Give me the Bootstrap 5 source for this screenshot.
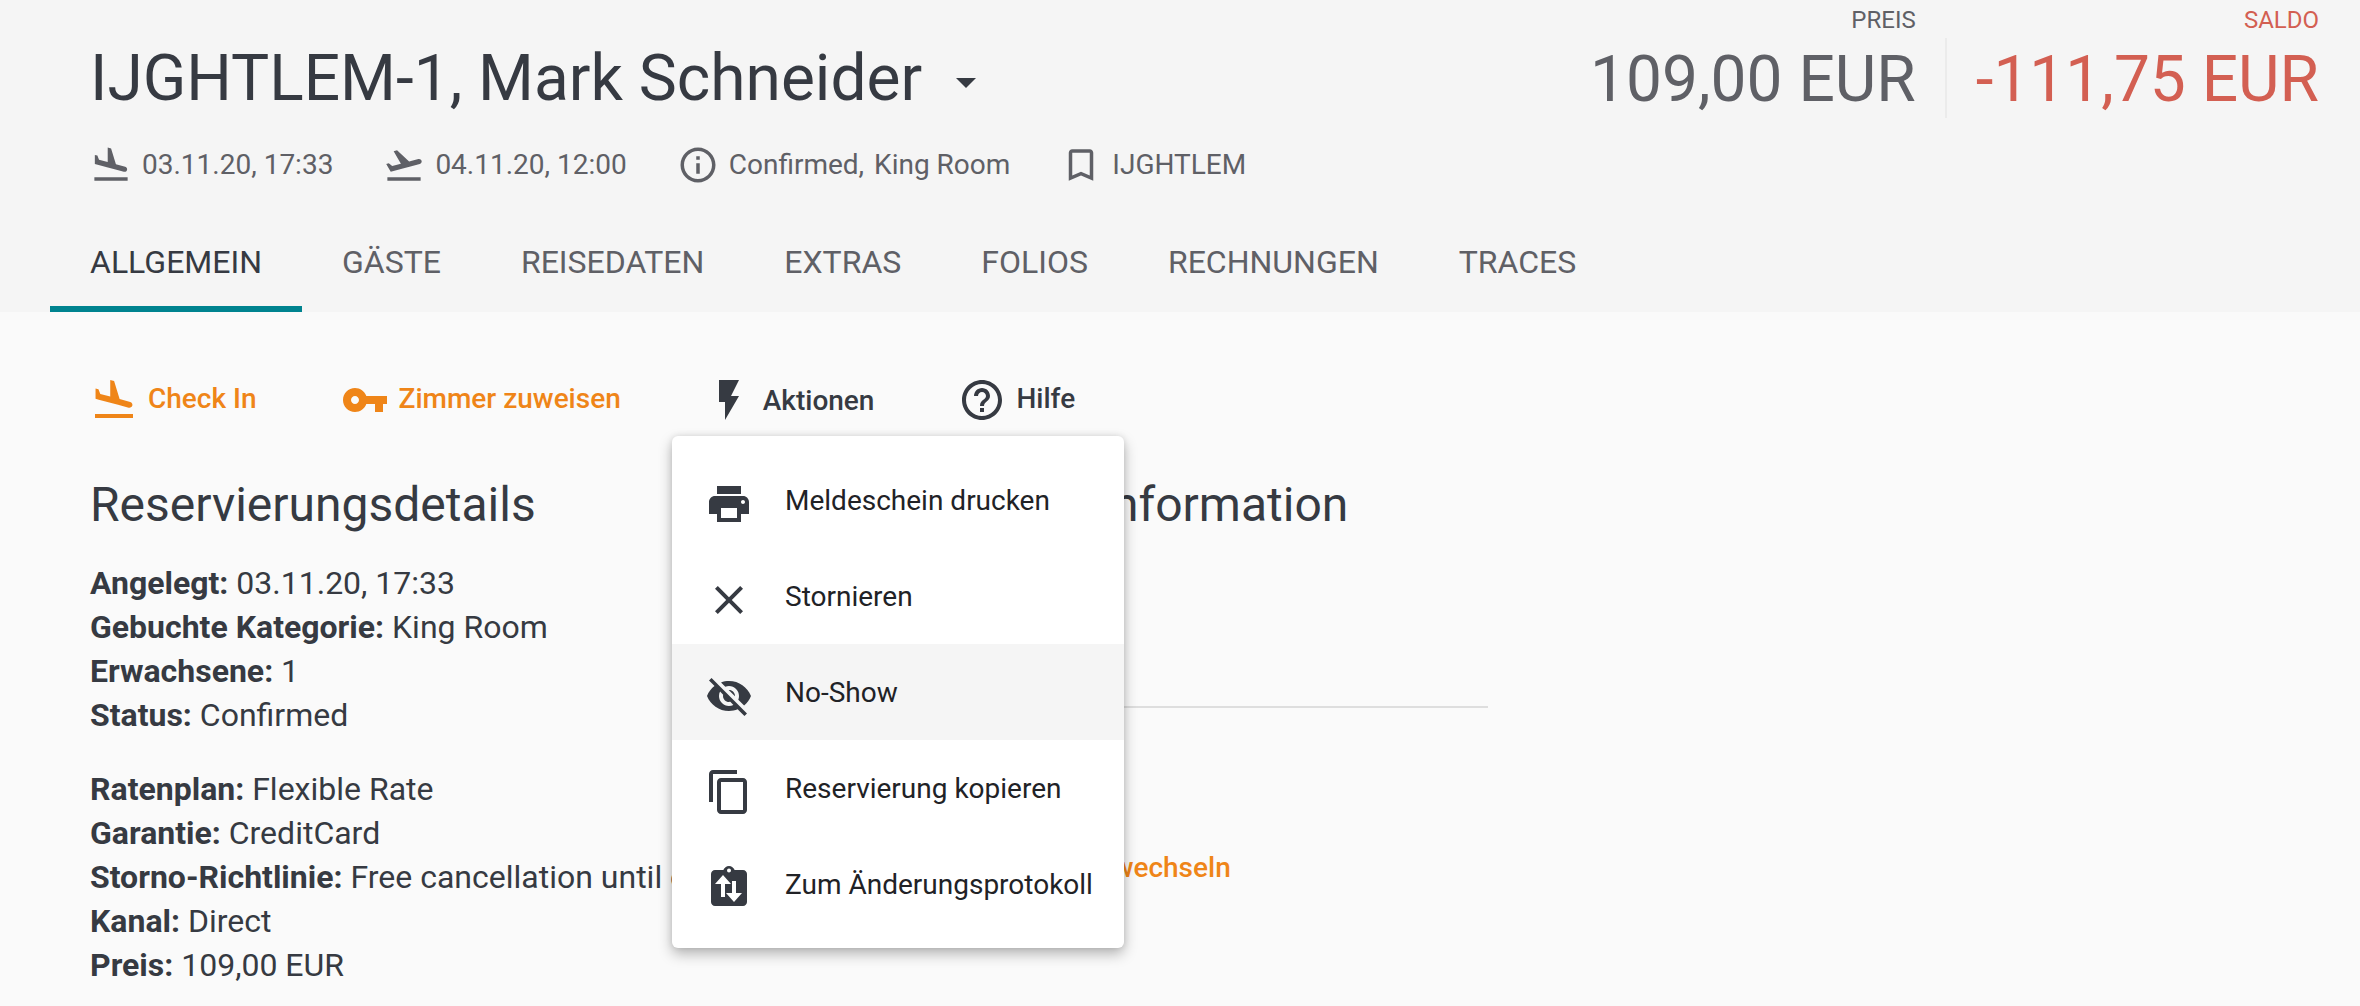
<!DOCTYPE html>
<html lang="de">
<head>
<meta charset="utf-8">
<title>IJGHTLEM-1</title>
<link href="https://cdn.jsdelivr.net/npm/bootstrap@5.3.0/dist/css/bootstrap.min.css" rel="stylesheet">
<style>
html,body{height:100%;}
body{background:#fafafa;color:#363a42;font-family:Roboto,"Liberation Sans",sans-serif;font-size:32px;line-height:44px;overflow:hidden;}
.mi{fill:currentColor;flex:none;display:block;}
.mi-42{width:42px;height:42px;}
.mi-48{width:48px;height:48px;}
.res-head{background:#f5f5f5;height:312px;}
.head-top{padding:0 41px 0 90px;}
.title-wrap{margin-top:43px;}
.res-title{font-size:64px;line-height:72px;font-weight:400;margin:0;color:#363a42;}
.caret-mark{width:0;height:0;border-left:10.5px solid transparent;border-right:10.5px solid transparent;border-top:10.5px solid #363a42;margin:8px 0 0 34px;}
.meta-row{padding:0 0 0 90px;margin-top:26px;color:#5f6066;font-size:28px;line-height:42px;height:42px;}
.meta-item{margin-right:50px;}
.meta-item .mi{margin-right:10px;}
.st-gap{margin-left:3px;}
.amount-lab{font-size:24px;line-height:24px;text-align:right;margin-top:8px;color:#5f6066;}
.amount-val{font-size:64px;line-height:72px;color:#5f6066;margin-top:12px;}
.amount-sep{width:2px;background:#ebebeb;height:80px;margin:38px 29px 0 29px;}
.is-neg{color:#d35f52;}
.tab-row{padding-left:50px;margin-top:49px;}
.tab-link{display:block;padding:0 40px;height:77px;line-height:55px;font-size:32px;color:#5f6066;text-transform:uppercase;text-decoration:none;border-bottom:6px solid transparent;}
.tab-link.is-on{color:#363a42;border-bottom-color:#00838f;}
.act-row{padding-left:90px;margin-top:64px;height:48px;font-size:28px;line-height:48px;font-weight:500;}
.act-link{text-decoration:none;color:#363a42;margin-right:84px;}
.act-link .mi{margin-right:10px;}
.act-link span{margin-bottom:2px;}
.act-orange{color:#ef8518;}
.act-c span{margin-bottom:0;margin-top:1px;}
.body-cols{padding-left:90px;margin-top:51px;}
.col-left{width:844px;flex:none;}
.col-right{width:554px;flex:none;}
.sec-title{font-size:48px;line-height:60px;font-weight:400;margin:0 0 26px;color:#363a42;}
.info-group{margin:0 0 30px;white-space:nowrap;}
.info-group b{font-weight:700;}
.rule-line{margin:171px 0 0;border:0;border-top:2px solid #dedede;opacity:1;}
.swap-link{color:#ef8518;font-weight:500;text-decoration:none;display:block;margin:138px 0 0 74px;font-size:28px;}
.stage{position:relative;height:1006px;}
.menu-pop{display:block;position:absolute;left:672px;top:436px;width:452px;height:512px;padding:16px 0;margin:0;border:0;border-radius:6px;background:#fff;box-shadow:0 6px 14px rgba(0,0,0,.28),0 0 6px rgba(0,0,0,.1);}
.menu-pop .dropdown-item{height:96px;padding:0 0 0 33px;font-size:28px;color:#212226;line-height:96px;}
.menu-pop .dropdown-item span{margin-top:2px;}
.menu-pop .dropdown-item.is-hover{background:#f5f5f5;}
.menu-pop .mi{margin-top:8px;margin-right:32px;color:#363a42;}
</style>
</head>
<body>
<div class="stage">
  <header class="res-head">
    <div class="head-top d-flex justify-content-between align-items-start">
      <div class="title-wrap d-flex align-items-center">
        <h1 class="res-title">IJGHTLEM-1, Mark Schneider</h1>
        <span class="caret-mark"></span>
      </div>
      <div class="d-flex">
        <div>
          <div class="amount-lab">PREIS</div>
          <div class="amount-val">109,00 EUR</div>
        </div>
        <div class="amount-sep"></div>
        <div>
          <div class="amount-lab is-neg">SALDO</div>
          <div class="amount-val is-neg">-111,75 EUR</div>
        </div>
      </div>
    </div>
    <div class="meta-row d-flex align-items-center">
      <div class="meta-item d-flex align-items-center">
        <svg class="mi mi-42" viewBox="0 0 24 24"><path d="M2.5 19h19v2h-19zm7.18-5.73l4.35 1.16 5.31 1.42c.8.21 1.62-.26 1.84-1.06.21-.8-.26-1.62-1.06-1.84l-5.31-1.42-2.76-9.02L10.12 2v8.28L5.15 8.95l-.93-2.32-1.45-.39v5.17l1.6.43 5.31 1.43z"/></svg>
        <span>03.11.20, 17:33</span>
      </div>
      <div class="meta-item d-flex align-items-center">
        <svg class="mi mi-42" viewBox="0 0 24 24"><path d="M2.5 19h19v2h-19zm19.57-9.36c-.21-.8-1.04-1.28-1.84-1.06L14.92 10l-6.9-6.43-1.93.51 4.14 7.17-4.97 1.33-1.97-1.54-1.45.39 1.82 3.16.77 1.33 1.6-.43 5.31-1.42 4.35-1.16L21 11.49c.81-.23 1.28-1.05 1.07-1.85z"/></svg>
        <span>04.11.20, 12:00</span>
      </div>
      <div class="meta-item d-flex align-items-center">
        <svg class="mi mi-42" viewBox="0 0 24 24"><path d="M11 7h2v2h-2zm0 4h2v6h-2zm1-9C6.48 2 2 6.48 2 12s4.48 10 10 10 10-4.48 10-10S17.52 2 12 2zm0 18c-4.41 0-8-3.59-8-8s3.59-8 8-8 8 3.59 8 8-3.59 8-8 8z"/></svg>
        <span>Confirmed, <span class="st-gap">King Room</span></span>
      </div>
      <div class="meta-item d-flex align-items-center">
        <svg class="mi mi-42" viewBox="0 0 24 24"><path d="M17 3H7c-1.1 0-1.99.9-1.99 2L5 21l7-3 7 3V5c0-1.1-.9-2-2-2zm0 15l-5-2.18L7 18V5h10v13z"/></svg>
        <span>IJGHTLEM</span>
      </div>
    </div>
    <nav class="tab-row nav">
      <a class="tab-link is-on" href="#">Allgemein</a>
      <a class="tab-link" href="#">Gäste</a>
      <a class="tab-link" href="#">Reisedaten</a>
      <a class="tab-link" href="#">Extras</a>
      <a class="tab-link" href="#">Folios</a>
      <a class="tab-link" href="#">Rechnungen</a>
      <a class="tab-link" href="#">Traces</a>
    </nav>
  </header>

  <div class="act-row d-flex align-items-center">
    <a class="act-link act-orange d-flex align-items-center" href="#">
      <svg class="mi mi-48" viewBox="0 0 24 24"><path d="M2.5 19h19v2h-19zm7.18-5.73l4.35 1.16 5.31 1.42c.8.21 1.62-.26 1.84-1.06.21-.8-.26-1.62-1.06-1.84l-5.31-1.42-2.76-9.02L10.12 2v8.28L5.15 8.95l-.93-2.32-1.45-.39v5.17l1.6.43 5.31 1.43z"/></svg>
      <span>Check In</span>
    </a>
    <a class="act-link act-orange d-flex align-items-center" href="#">
      <svg class="mi mi-48" viewBox="0 0 24 24"><path d="M12.65 10C11.83 7.67 9.61 6 7 6c-3.31 0-6 2.69-6 6s2.69 6 6 6c2.61 0 4.83-1.67 5.65-4H17v4h4v-4h2v-4H12.65zM7 14c-1.1 0-2-.9-2-2s.9-2 2-2 2 .9 2 2-.9 2-2 2z"/></svg>
      <span>Zimmer zuweisen</span>
    </a>
    <a class="act-link act-c d-flex align-items-center" href="#">
      <svg class="mi mi-48" viewBox="0 0 24 24"><path d="M7 2v11h3v9l7-12h-4l4-8z"/></svg>
      <span>Aktionen</span>
    </a>
    <a class="act-link d-flex align-items-center" href="#">
      <svg class="mi mi-48" viewBox="0 0 24 24"><path d="M11 18h2v-2h-2v2zm1-16C6.48 2 2 6.48 2 12s4.48 10 10 10 10-4.48 10-10S17.52 2 12 2zm0 18c-4.41 0-8-3.59-8-8s3.59-8 8-8 8 3.59 8 8-3.59 8-8 8zm0-14c-2.21 0-4 1.79-4 4h2c0-1.1.9-2 2-2s2 .9 2 2c0 2-3 1.75-3 5h2c0-2.25 3-2.5 3-5 0-2.21-1.79-4-4-4z"/></svg>
      <span>Hilfe</span>
    </a>
  </div>

  <div class="body-cols d-flex">
    <section class="col-left">
      <h2 class="sec-title">Reservierungsdetails</h2>
      <p class="info-group"><b>Angelegt:</b> 03.11.20, 17:33<br><b>Gebuchte Kategorie:</b> King Room<br><b>Erwachsene:</b> 1<br><b>Status:</b> Confirmed</p>
      <p class="info-group"><b>Ratenplan:</b> Flexible Rate<br><b>Garantie:</b> CreditCard<br><b>Storno-Richtlinie:</b> Free cancellation until one day before<br><b>Kanal:</b> Direct<br><b>Preis:</b> 109,00 EUR</p>
    </section>
    <section class="col-right">
      <h2 class="sec-title mb-0">Zimmerinformation</h2>
      <hr class="rule-line">
      <a class="swap-link" href="#">Zimmer wechseln</a>
    </section>
  </div>

  <div class="dropdown-menu menu-pop">
    <a class="dropdown-item d-flex align-items-center" href="#"><svg class="mi mi-48" viewBox="0 0 24 24"><path d="M19 8H5c-1.66 0-3 1.34-3 3v6h4v4h12v-4h4v-6c0-1.66-1.34-3-3-3zm-3 11H8v-5h8v5zm3-7c-.55 0-1-.45-1-1s.45-1 1-1 1 .45 1 1-.45 1-1 1zm-1-9H6v4h12V3z"/></svg><span>Meldeschein drucken</span></a>
    <a class="dropdown-item d-flex align-items-center" href="#"><svg class="mi mi-48" viewBox="0 0 24 24"><path d="M19 6.41L17.59 5 12 10.59 6.41 5 5 6.41 10.59 12 5 17.59 6.41 19 12 13.41 17.59 19 19 17.59 13.41 12z"/></svg><span>Stornieren</span></a>
    <a class="dropdown-item is-hover d-flex align-items-center" href="#"><svg class="mi mi-48" viewBox="0 0 24 24"><path d="M12 7c2.76 0 5 2.24 5 5 0 .65-.13 1.26-.36 1.83l2.92 2.92c1.51-1.26 2.7-2.89 3.43-4.75-1.73-4.39-6-7.5-11-7.5-1.4 0-2.74.25-3.98.7l2.16 2.16C10.74 7.13 11.35 7 12 7zM2 4.27l2.28 2.28.46.46C3.08 8.3 1.78 10.02 1 12c1.73 4.39 6 7.5 11 7.5 1.55 0 3.03-.3 4.38-.84l.42.42L19.73 22 21 20.73 3.27 3 2 4.27zM7.53 9.8l1.55 1.55c-.05.21-.08.43-.08.65 0 1.66 1.34 3 3 3 .22 0 .44-.03.65-.08l1.55 1.55c-.67.33-1.41.53-2.2.53-2.76 0-5-2.24-5-5 0-.79.2-1.53.53-2.2zm4.31-.78l3.15 3.15.02-.16c0-1.66-1.34-3-3-3l-.17.01z"/></svg><span>No-Show</span></a>
    <a class="dropdown-item d-flex align-items-center" href="#"><svg class="mi mi-48" viewBox="0 0 24 24"><path d="M16 1H4c-1.1 0-2 .9-2 2v14h2V3h12V1zm3 4H8c-1.1 0-2 .9-2 2v14c0 1.1.9 2 2 2h11c1.1 0 2-.9 2-2V7c0-1.1-.9-2-2-2zm0 16H8V7h11v14z"/></svg><span>Reservierung kopieren</span></a>
    <a class="dropdown-item d-flex align-items-center" href="#"><svg class="mi mi-48" viewBox="0 0 24 24"><path fill-rule="evenodd" d="M19 3h-4.18C14.4 1.84 13.3 1 12 1c-1.3 0-2.4.84-2.82 2H5c-1.1 0-2 .9-2 2v14c0 1.1.9 2 2 2h14c1.1 0 2-.9 2-2V5c0-1.1-.9-2-2-2zM12 2.2a1 1 0 1 1 0 2 1 1 0 0 1 0-2zM9 5.5L13 10h-3v6.5H8V10H5zM13.5 8.5h2v6h3L14.5 19l-4-4.5h3z"/></svg><span>Zum Änderungsprotokoll</span></a>
  </div>
</div>
</body>
</html>
